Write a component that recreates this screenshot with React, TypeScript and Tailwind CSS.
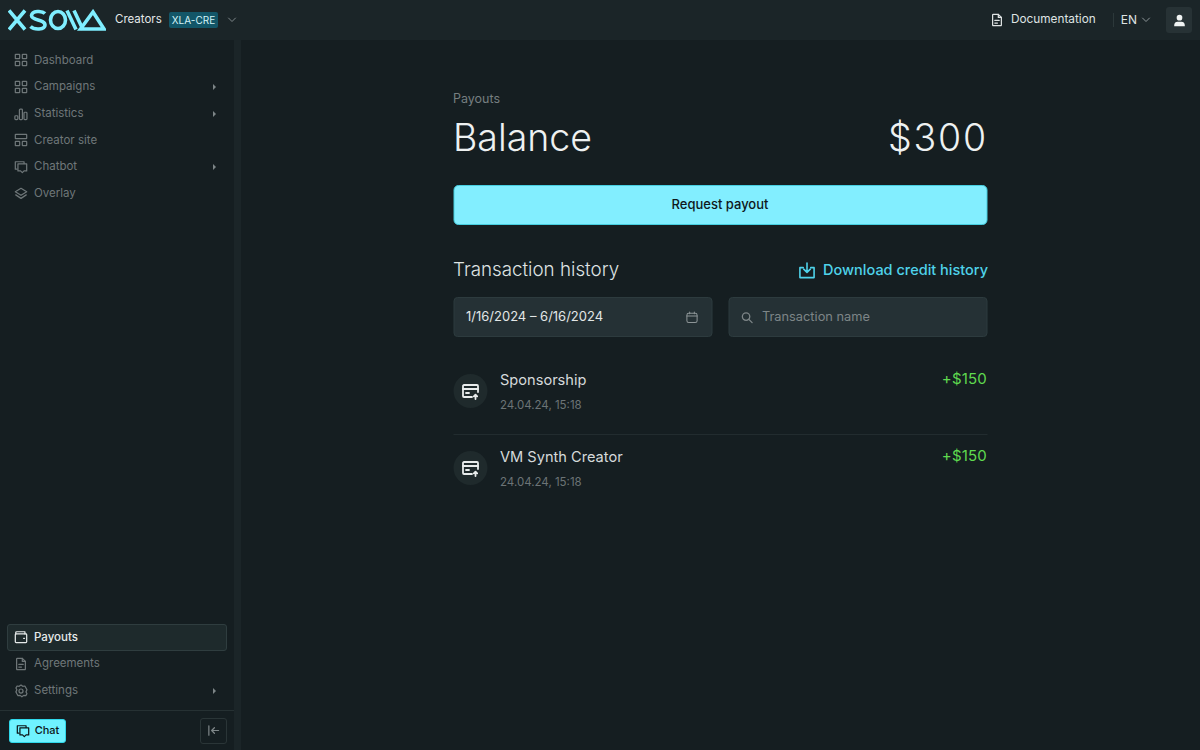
import type { ReactNode } from "react";

const Icon = ({ children, className = "w-[14px] h-[14px]" }: { children: ReactNode; className?: string }) => (
  <svg viewBox="0 0 16 16" fill="none" stroke="currentColor" strokeWidth="1.4" strokeLinecap="round" strokeLinejoin="round" className={`${className} shrink-0`}>
    {children}
  </svg>
);

const GridIcon = () => (
  <Icon>
    <rect x="1.5" y="1.5" width="5" height="5" rx="0.6" />
    <rect x="9.5" y="1.5" width="5" height="5" rx="0.6" />
    <rect x="1.5" y="9.5" width="5" height="5" rx="0.6" />
    <rect x="9.5" y="9.5" width="5" height="5" rx="0.6" />
  </Icon>
);
const BarsIcon = () => (
  <Icon>
    <rect x="1" y="10" width="3.4" height="4.5" rx="1" />
    <rect x="6.2" y="2.5" width="3.4" height="12" rx="1" />
    <rect x="11.4" y="6" width="3.4" height="8.5" rx="1" />
  </Icon>
);
const SiteIcon = () => (
  <Icon>
    <rect x="1.5" y="1.5" width="13" height="5" rx="0.6" />
    <rect x="1.5" y="9.5" width="5" height="5" rx="0.6" />
    <rect x="9.5" y="9.5" width="5" height="5" rx="0.6" />
  </Icon>
);
const ChatIcon = () => (
  <Icon>
    <path d="M3.5 10.5H1.5V2h10v2" />
    <path d="M4.5 4.5h10v8h-3l-2 2-2-2h-3z" />
  </Icon>
);
const LayersIcon = () => (
  <Icon>
    <path d="M8 1.5l6.5 4L8 9.5l-6.5-4z" />
    <path d="M2 9l6 4 6-4" />
  </Icon>
);
const WalletIcon = () => (
  <Icon>
    <path d="M2 4.5V3a1 1 0 0 1 1-1h9.5v2.5" />
    <rect x="1.5" y="4.5" width="13" height="10" rx="1" />
    <path d="M11 9.5h1" />
  </Icon>
);
const DocIcon = () => (
  <Icon>
    <path d="M3 2.2a.7.7 0 0 1 .7-.7H9.5l3.5 3.5v8.8a.7.7 0 0 1-.7.7H3.7a.7.7 0 0 1-.7-.7z" />
    <path d="M9.5 1.5V5H13M5.500 8.500h5M5.500 11.500h3" />
  </Icon>
);
const GearIcon = () => (
  <Icon>
    <path d="M8 1.2l2 1.400 2.400-.300 1.300 2.200 1.100 2.100-1.100 2.400 1.100 2.100-1.300 2.200-2.400-.300-2.100 1.600-2-1.600-2.400.300-1.300-2.200-1.100-2.100 1.100-2.400-1.100-2.100 1.300-2.200 2.400.300z" />
    <circle cx="8" cy="8" r="2.3" />
  </Icon>
);
const CardIcon = () => (
  <svg viewBox="0 0 18 18" fill="none" stroke="currentColor" strokeWidth="1.8" strokeLinecap="round" strokeLinejoin="round" className="w-[18px] h-[18px]">
    <path d="M10.5 15H2.5a1 1 0 0 1-1-1V4a1 1 0 0 1 1-1h13a1 1 0 0 1 1 1v6" />
    <path d="M1.500 7h15M4.500 11h3" />
    <path d="M14 17v-4M12.300 14.300L14 12.600l1.700 1.700" />
  </svg>
);

const navTop = [
  { label: "Dashboard", icon: <GridIcon /> },
  { label: "Campaigns", icon: <GridIcon />, arrow: true },
  { label: "Statistics", icon: <BarsIcon />, arrow: true },
  { label: "Creator site", icon: <SiteIcon /> },
  { label: "Chatbot", icon: <ChatIcon />, arrow: true },
  { label: "Overlay", icon: <LayersIcon /> },
];

function NavItem({ label, icon, arrow, active }: { label: string; icon: ReactNode; arrow?: boolean; active?: boolean }) {
  return (
    <div
      className={`h-[26.67px] flex items-center pl-[6px] pr-[10px] gap-[6px] rounded-[3px] border ${
        active ? "bg-[#1e2a2c] border-[#2f3d3f] text-[#e6eaea]" : "border-transparent text-[#6f7779]"
      }`}
    >
      <span className="flex items-center">{icon}</span>
      <span className={`text-[11.5px] flex-1 ${active ? "font-medium" : ""}`}>{label}</span>
      {arrow && <span className="w-0 h-0 border-y-[3px] border-y-transparent border-l-[3.5px] border-l-[#7d8587]" />}
    </div>
  );
}

function Logo() {
  return (
    <svg viewBox="0 0 98 22" fill="none" stroke="#7feeff" strokeWidth="3.6" className="w-[98px] h-[22px]">
      <path d="M1 1.500l16 19M17 1.500l-16 19" />
      <path d="M37 4.500C34 1.500 24 1.500 23.500 6.500c0 5.500 13.500 3.500 13.500 9.500 0 5-11 5-14.500 1.500" />
      <ellipse cx="50" cy="11" rx="7.500" ry="8.500" />
      <path d="M59 1.500l9 19M66 1.500l9 19" />
      <path d="M72.500 20L85 3l11 17z" strokeLinejoin="miter" />
    </svg>
  );
}

function Row({ title, border }: { title: string; border?: boolean }) {
  return (
    <div className={`h-[77px] flex ${border ? "border-b border-[#222c2f]" : ""}`}>
      <div className="w-[34px] h-[34px] mt-[16px] rounded-full bg-[#1f2a2c] text-[#e8ecec] flex items-center justify-center">
        <CardIcon />
      </div>
      <div className="ml-[13px] flex-1 pt-[12px]">
        <div className="text-[14.6px] leading-[20px] text-[#d5dadb]">{title}</div>
        <div className="text-[11.5px] leading-[16px] mt-[7px] text-[#6c7476]">24.04.24, 15:18</div>
      </div>
      <div className="text-[15px] leading-[20px] pt-[11px] tracking-[0.2px] text-[#5fd94f]">+$150</div>
    </div>
  );
}

export default function App() {
  return (
    <div className="w-[1200px] h-[750px] overflow-hidden flex flex-col bg-[#151e21] font-['Inter',sans-serif]">
      <header className="h-[40px] shrink-0 bg-[#1b2528] flex items-center pl-[8px] pr-[8px]">
        <Logo />
        <span className="ml-[9px] text-[11.5px] text-[#e4e8e8]">Creators</span>
        <span className="ml-[7px] h-[16px] px-[3px] rounded-[2px] bg-[#135668] text-[#d5f4f8] text-[10px] leading-[16px]">XLA-CRE</span>
        <svg viewBox="0 0 12 8" className="ml-[9px] w-[10px] h-[6px]" fill="none" stroke="#8a9294" strokeWidth="1.2">
          <path d="M1 1l5 5 5-5" />
        </svg>
        <div className="ml-auto flex items-center text-[#dfe3e3]">
          <DocIcon />
          <span className="ml-[7px] text-[11.8px]">Documentation</span>
          <span className="ml-[17px] w-px h-[14px] bg-[#2c383a]" />
          <span className="ml-[7px] text-[12px]">EN</span>
          <svg viewBox="0 0 12 8" className="ml-[4px] w-[10px] h-[6px]" fill="none" stroke="#9aa2a4" strokeWidth="1.2">
            <path d="M1 1l5 5 5-5" />
          </svg>
          <span className="ml-[15px] w-[26px] h-[26px] rounded-[3px] bg-[#273235] flex items-center justify-center">
            <svg viewBox="0 0 16 16" className="w-[13px] h-[13px]" fill="#f0f3f3">
              <circle cx="8" cy="4.500" r="3.500" />
              <path d="M1.500 15v-1.500c0-2.500 2-4 4-4h5c2 0 4 1.500 4 4V15z" />
            </svg>
          </span>
        </div>
      </header>

      <div className="flex-1 flex min-h-0">
        <aside className="w-[234px] shrink-0 flex flex-col bg-[#151e21]">
          <nav className="pt-[7px] px-[7px] flex flex-col">
            {navTop.map((n) => (
              <NavItem key={n.label} {...n} />
            ))}
          </nav>
          <div className="mt-auto px-[7px] flex flex-col pb-[6px]">
            <NavItem label="Payouts" icon={<WalletIcon />} active />
            <NavItem label="Agreements" icon={<DocIcon />} />
            <NavItem label="Settings" icon={<GearIcon />} arrow />
          </div>
          <div className="h-[40px] border-t border-[#263133] flex items-center justify-between pl-[9px] pr-[7px]">
            <button className="h-[24px] w-[57px] rounded-[3px] bg-[#6ff2ff] border border-[#2fd8ea] flex items-center justify-center gap-[5px] text-[#0d1518]">
              <ChatIcon />
              <span className="text-[11px] font-medium">Chat</span>
            </button>
            <button className="w-[27px] h-[26px] rounded-[3px] border border-[#2a3537] flex items-center justify-center text-[#7f8789]">
              <svg viewBox="0 0 14 14" className="w-[13px] h-[13px]" fill="none" stroke="currentColor" strokeWidth="1.3" strokeLinecap="round" strokeLinejoin="round">
                <path d="M2 2v10M12.500 7H5M8 4L5 7l3 3" />
              </svg>
            </button>
          </div>
        </aside>
        <div className="w-[7px] shrink-0 bg-[#1b2528]" />

        <main className="flex-1">
          <div className="w-[534px] mx-auto -translate-x-[0.5px]">
            <div className="pt-[50px] text-[12.500px] leading-[18px] text-[#767e80]">Payouts</div>
            <div className="mt-[8px] flex items-center justify-between text-[37.500px] leading-[44px] font-light text-[#eef1f1]">
              <span>Balance</span>
              <span className="tracking-[1.800px] -mr-[1px]">$300</span>
            </div>
            <button className="mt-[25px] w-full h-[40px] rounded-[5px] bg-[#82eeff] border border-[#46cfe0] text-[13px] font-medium text-[#0f181b]">
              Request payout
            </button>
            <div className="mt-[31px] flex items-center justify-between">
              <span className="text-[18.800px] leading-[28px] font-light text-[#dfe3e3]">Transaction history</span>
              <span className="flex items-center gap-[8px] text-[#4fd3ea]">
                <svg viewBox="0 0 18 18" className="w-[17px] h-[17px]" fill="none" stroke="currentColor" strokeWidth="1.700" strokeLinecap="round" strokeLinejoin="round">
                  <path d="M5 6H1.500v10.500h15V6H13" />
                  <path d="M9 1v9.500M5.500 7.500L9 11l3.500-3.500" />
                </svg>
                <span className="text-[14.500px] font-medium -mr-[1px]">Download credit history</span>
              </span>
            </div>
            <div className="mt-[13px] grid grid-cols-2 gap-[16px]">
              <div className="h-[40px] rounded-[4px] bg-[#253135] border border-[#2d3b3e] flex items-center pl-[12px] pr-[13px] justify-between text-[#e2e6e6]">
                <span className="text-[13px]">1/16/2024 – 6/16/2024</span>
                <svg viewBox="0 0 14 14" className="w-[13px] h-[13px] text-[#8d9597]" fill="none" stroke="currentColor" strokeWidth="1.100" strokeLinecap="round">
                  <rect x="1.500" y="2.500" width="11" height="10" rx="2" />
                  <path d="M1.500 5.500h11M4.500 1v2M9.500 1v2" />
                </svg>
              </div>
              <div className="h-[40px] rounded-[4px] bg-[#253135] border border-[#2d3b3e] flex items-center pl-[11px] text-[#7d8587]">
                <svg viewBox="0 0 14 14" className="w-[13px] h-[13px]" fill="none" stroke="currentColor" strokeWidth="1.400" strokeLinecap="round">
                  <circle cx="6" cy="6" r="4" />
                  <path d="M9 9l3.500 3.500" />
                </svg>
                <span className="ml-[9px] text-[12.800px]">Transaction name</span>
              </div>
            </div>
            <div className="mt-[21px]">
              <Row title="Sponsorship" border />
              <Row title="VM Synth Creator" />
            </div>
          </div>
        </main>
      </div>
    </div>
  );
}
